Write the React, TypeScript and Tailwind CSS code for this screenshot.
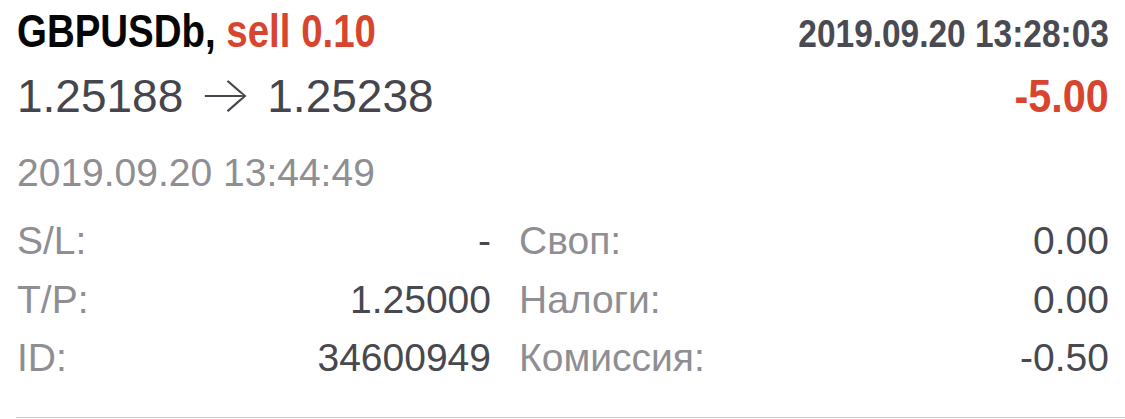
export default function App() {
  const details: [string, string, string, string][] = [
    ["S/L:", "-", "Своп:", "0.00"],
    ["T/P:", "1.25000", "Налоги:", "0.00"],
    ["ID:", "34600949", "Комиссия:", "-0.50"],
  ];

  return (
    <div className="w-[1125px] h-[419px] bg-white overflow-hidden flex flex-col font-['Liberation_Sans',Arial,sans-serif]">
      <div className="pl-[17px] pr-[16px] pt-[6px]">
        {/* symbol, side and volume; open time */}
        <div className="h-[50px] flex items-baseline justify-between leading-[50px] font-bold">
          <div className="inline-block origin-left scale-x-[0.818] whitespace-nowrap text-[47px] text-[#060606]">
            GBPUSDb, <span className="text-[#d8452f]">sell 0.10</span>
          </div>
          <div className="inline-block origin-right scale-x-[0.88] whitespace-nowrap text-[38px] text-[#4a4a52]">
            2019.09.20 13:28:03
          </div>
        </div>

        {/* open → close price; profit */}
        <div className="h-[76px] flex items-baseline justify-between leading-[76px]">
          <div className="flex items-baseline whitespace-nowrap text-[46px] text-[#45454d]">
            <span>1.25188</span>
            <span className="inline-block w-[84px] text-center">
              <span className="inline-block scale-x-[1.14] font-['Inter',sans-serif] font-extralight text-[50px]">→</span>
            </span>
            <span>1.25238</span>
          </div>
          <div className="inline-block origin-right scale-x-[0.9] whitespace-nowrap font-bold text-[46px] text-[#d8452f]">
            -5.00
          </div>
        </div>

        {/* close time */}
        <div className="mt-[2px] h-[78px] text-[39px] leading-[78px] text-[#8e8e93]">2019.09.20 13:44:49</div>

        {/* order details */}
        <div className="flex flex-col">
          {details.map(([l1, v1, l2, v2]) => (
            <div key={l1} className="h-[58.5px] flex text-[39px] leading-[58.5px]">
              <div className="w-[474px] flex justify-between">
                <span className="text-[#8e8e93]">{l1}</span>
                <span className="text-[#48484f]">{v1}</span>
              </div>
              <div className="ml-[28px] flex-1 flex justify-between">
                <span className="text-[#8e8e93]">{l2}</span>
                <span className="text-[#48484f]">{v2}</span>
              </div>
            </div>
          ))}
        </div>
      </div>
      <div className="flex-1" />
      <div className="ml-[16px] mb-[1px] h-[1.5px] bg-[#c8c7cc]" />
    </div>
  );
}
